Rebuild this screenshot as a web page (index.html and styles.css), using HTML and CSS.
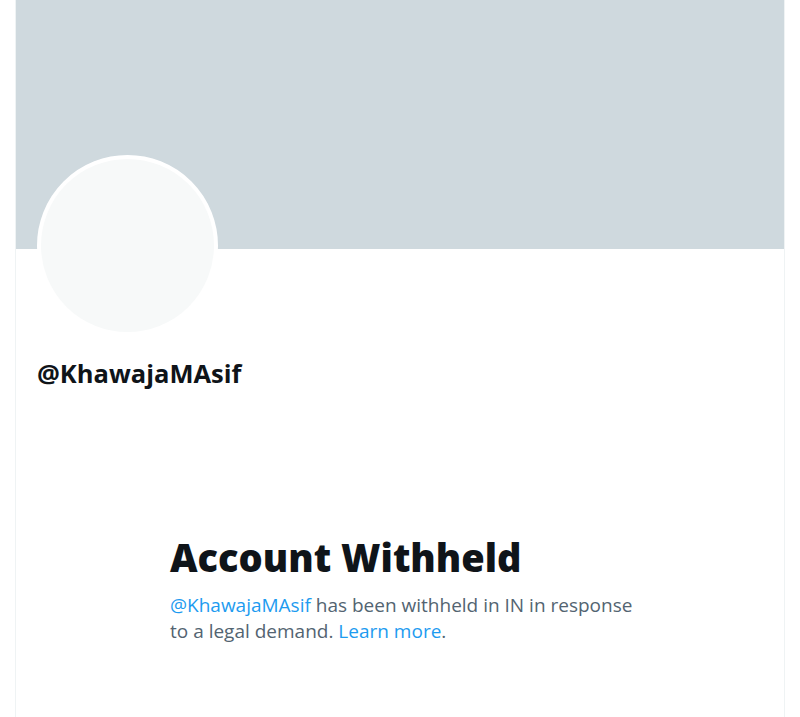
FILE: index.html
```html
<!DOCTYPE html>
<html lang="en">

<head>
    <meta charset="UTF-8">
    <meta name="viewport" content="width=device-width, initial-scale=1.0">
    <title>@KhawajaMAsif</title>
    <link rel="stylesheet" href="styles.css">
</head>

<body>
    <div class="column">
        <div class="banner"></div>
        <div class="profile">
            <div class="avatar"></div>
            <div class="handle">@KhawajaMAsif</div>
        </div>
        <div class="withheld">
            <h1>Account Withheld</h1>
            <p><a href="#">@KhawajaMAsif</a> has been withheld in IN in response to a legal demand. <a href="#">Learn more</a>.</p>
        </div>
    </div>
</body>

</html>
```

FILE: styles.css
```css
html {
    background-color: #ffffff;
    font-family: "Open Sans", "Noto Sans", sans-serif;
}

body {
    margin: 0;
}

.column {
    width: 770px;
    margin-left: 15px;
    min-height: 717px;
    border-left: 1px solid #eff3f4;
    border-right: 1px solid #eff3f4;
    box-sizing: border-box;
}

.banner {
    height: 249px;
    background-color: #cfd9de;
}

.profile {
    padding: 0 21px;
}

.avatar {
    width: 173px;
    height: 173px;
    margin-top: -94px;
    border: 4px solid #ffffff;
    border-radius: 50%;
    background-color: #f7f9f9;
}

.handle {
    margin-top: 21px;
    font-size: 25.5px;
    line-height: 32px;
    font-weight: 700;
    color: #0f1419;
}

.withheld {
    width: 468px;
    margin: 144px 0 0 154px;
}

h1 {
    margin: 0;
    font-size: 38px;
    font-weight: 800;
    color: #0f1419;
    line-height: 48px;
}

p {
    margin: 11px 0 0;
    font-size: 19px;
    line-height: 26px;
    color: #536471;
}

a {
    color: #1d9bf0;
    text-decoration: none;
}
```
